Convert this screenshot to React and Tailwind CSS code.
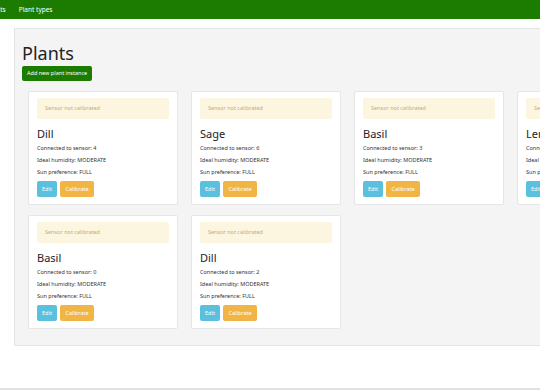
const PLANTS = [
  { name: 'Dill', sensor: 4 },
  { name: 'Sage', sensor: 6 },
  { name: 'Basil', sensor: 3 },
  { name: 'Lemon balm', sensor: 5 },
  { name: 'Basil', sensor: 0 },
  { name: 'Dill', sensor: 2 },
]

function PlantCard({ plant }) {
  return (
    <div className="w-[150px] shrink-0 bg-white border border-[#e6e6e6] rounded-[2px] px-[8px] pt-[6px] pb-[7px]">
      <div className="h-[21px] rounded-[2px] bg-[#fcf6e1] text-[#c9ab74] text-[5.5px] flex items-center pl-[8px]">
        Sensor not calibrated
      </div>
      <div className="text-[11px] text-[#222] leading-none mt-[9px] whitespace-nowrap">{plant.name}</div>
      <div className="text-[5.5px] text-[#333] leading-[12px] mt-[3px] whitespace-nowrap">
        <div>Connected to sensor: {plant.sensor}</div>
        <div>Ideal humidity: MODERATE</div>
        <div>Sun preference: FULL</div>
      </div>
      <div className="flex gap-[3px] mt-[3px]">
        <button className="h-[16px] w-[20px] rounded-[2px] bg-[#5bc0de] text-white text-[5.5px]">Edit</button>
        <button className="h-[16px] w-[34px] rounded-[2px] bg-[#f0b545] text-white text-[5.5px]">Calibrate</button>
      </div>
    </div>
  )
}

export default function App() {
  return (
    <div className="w-[540px] h-[390px] overflow-hidden bg-white relative" style={{ fontFamily: '"Noto Sans", "Open Sans", sans-serif' }}>
      {/* navbar, page scrolled a bit to the right */}
      <div className="h-[19px] bg-[#1c7c02] flex items-center text-white text-[6.5px] overflow-hidden">
        <span className="-ml-[13px]">Plants</span>
        <span className="ml-[13px]">Plant types</span>
      </div>

      <div className="ml-[14px] mt-[9px] w-[560px] h-[318px] bg-[#f4f4f4] border border-[#e4e4e4] border-r-0 pl-[7px] pt-[15px]">
        <h1 className="text-[18px] text-[#222] leading-none">Plants</h1>
        <button className="block mt-[4px] h-[15px] px-[5px] rounded-[2px] bg-[#1c7c02] text-white text-[5.5px]">
          Add new plant instance
        </button>
        <div className="ml-[6px] mt-[10px] flex flex-nowrap gap-x-[13px]">
          {PLANTS.slice(0, 4).map((p, i) => <PlantCard key={i} plant={p} />)}
        </div>
        <div className="ml-[6px] mt-[10px] flex gap-x-[13px]">
          {PLANTS.slice(4).map((p, i) => <PlantCard key={i} plant={p} />)}
        </div>
      </div>

      <div className="absolute left-0 right-0 bottom-0 h-[2px] bg-[#e2e2e2]" />
    </div>
  )
}
